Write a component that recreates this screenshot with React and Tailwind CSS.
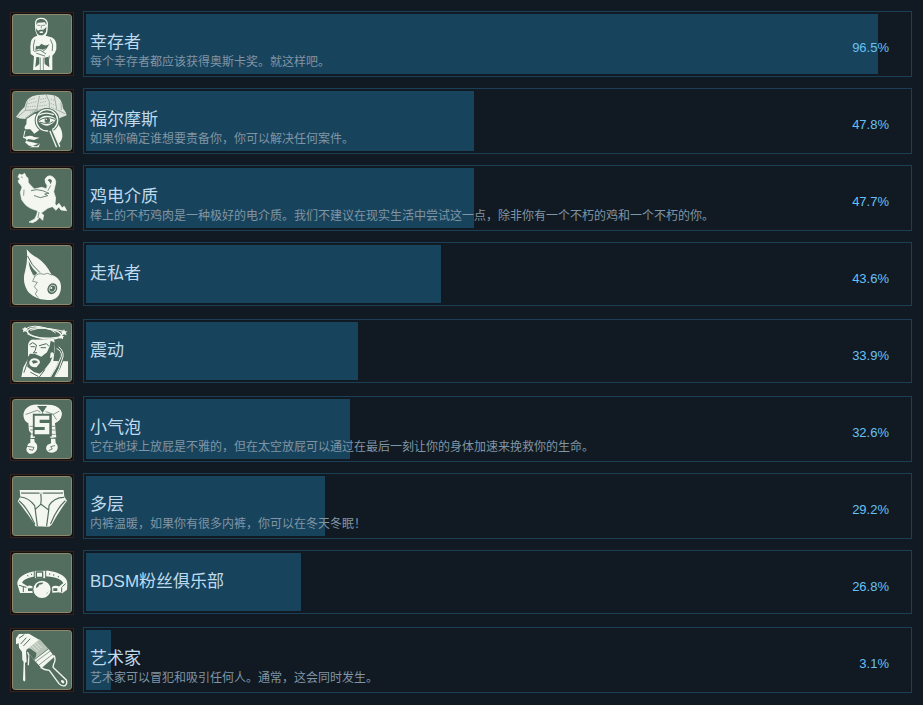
const INK = "#f3f7ef";
const FELT = "#536e5e";

function SurvivorIcon() {
  return (
    <g strokeLinecap="round" strokeLinejoin="round">
      <path d="M105 58 Q104 43 121 41 Q142 40 144 58 L143 78 Q142 90 137 95 L148 98 Q166 100 169 120 L169 136 Q166 148 157 155 L157 198 L99 198 L102 157 L92 150 Q89 130 93 112 Q97 98 112 95 Q104 84 105 58Z" fill={INK} />
      <path d="M109 58 Q108 46 121 45 Q137 44 140 58 L138 64 L135 55 L113 56 L110 63Z" fill={FELT} />
      <path d="M108 73 L114 80 L120 77 L130 77 L139 69 L138 83 Q132 94 124 94 Q112 94 109 83Z" fill={FELT} />
      <path d="M113 64h7 M127 64h7 M124 65v7" stroke={FELT} strokeWidth="2" fill="none" />
      <path d="M118 83 Q124 80 130 83 L128 87 L120 87Z" fill={INK} />
      <path d="M104 108 Q98 123 101 140 M152 107 Q162 122 157 140 M104 142 L120 138 L137 149 M110 148 L134 156 M139 134 L128 142 M148 156 L145 172" fill="none" stroke={FELT} strokeWidth="2.5" />
      <path d="M108 125 Q117 130 124 119 Q137 129 148 120 L141 132 L128 137 L117 134 L106 138Z M109 159 L118 160 L118 180 L106 190Z M133 161 L146 158 L148 190 L134 180Z" fill={FELT} />
      <path d="M121 162v35 M130 162v35" stroke={FELT} strokeWidth="2" />
    </g>
  );
}

function DetectiveIcon() {
  return (
    <g strokeLinecap="round" strokeLinejoin="round">
      <path d="M48 108 Q61 88 74 77 Q78 47 112 42 Q144 38 166 44 Q187 52 189 82 Q198 93 200 103 L178 112 L174 100 Q140 80 104 93 L76 114 Q58 114 48 108Z" fill="#dfe5dc" />
      <path d="M80 114 L104 98 L174 102 L178 112 L176 132 Q188 148 187 168 Q184 185 167 196 L146 152 L118 147 L103 158 L91 145 L76 145 Q70 140 79 130Z" fill={INK} />
      <path d="M54 107 L76 88 L112 86 M76 87 L82 62 M76 112 L105 90 L138 82 M139 43 L148 62 L148 82 M118 46 L111 84 M163 46 L171 88 M175 88 L194 98 M183 66 L184 86" fill="none" stroke="#7f9286" strokeWidth="2" />
      <path d="M88 57L104 52 M86 68L108 62 M83 78L106 75 M122 55L137 52 M121 65L139 61 M119 75L140 72 M153 55L164 59 M153 68L168 74 M154 79L170 86 M91 94L106 85" stroke="#aab8ad" strokeWidth="3" strokeDasharray="2 5" />
      <circle cx="141" cy="118" r="37" fill={FELT} />
      <circle cx="141" cy="118" r="32" fill={FELT} stroke={INK} strokeWidth="4" />
      <path d="M114 119 Q124 103 142 104 Q160 104 168 115 Q159 131 143 134 Q127 134 114 119Z" fill={INK} />
      <path d="M116 119 Q138 103 165 115 M121 124 Q145 132 159 122" fill="none" stroke={FELT} strokeWidth="3" />
      <path d="M117 102 Q138 91 160 101" fill="none" stroke={INK} strokeWidth="4" />
      <circle cx="142" cy="118" r="8" fill={FELT} />
      <circle cx="139" cy="115" r="2" fill={INK} />
      <path d="M151 149 L174 199" stroke={FELT} strokeWidth="14" />
      <path d="M150 151 L169 197 M158 148 L179 196" stroke={INK} strokeWidth="4" />
      <path d="M77 147 L72 168 L85 165 Q95 163 102 168 L119 170 L102 177 L85 174 L75 184 L87 194 L110 196 L119 190 L104 185 L82 181 L77 173 L69 170 L73 150Z M111 190 L120 188 L116 199 L88 199Z" fill={INK} />
    </g>
  );
}

function ChickenIcon() {
  return (
    <g strokeLinecap="round" strokeLinejoin="round">
      <path d="M54 57 L58 48 L66 51 L74 46 L78 55 L84 61 L85 74 L94 84 L103 93 L125 88 L139 92 Q145 84 137 75 Q131 63 141 56 Q154 49 164 62 Q170 70 165 84 L161 101 L167 120 L165 137 Q157 148 143 151 L131 160 L123 165 L131 171 L128 187 L119 178 L110 188 L98 194 L87 192 L104 183 L110 171 L113 158 Q87 152 75 139 L65 125 L61 103 L66 88 L62 80 L57 76 L54 68 L60 63Z" fill={INK} stroke={INK} strokeWidth="2" />
      <path d="M158 127 L169 143 L177 136 L186 149 L193 145 L200 158 L183 156 L176 147 L168 157 L152 141Z" fill={INK} stroke={INK} strokeWidth="2" />
      <path d="M94 98 L110 95 L128 98 L147 106 L134 108 L143 113 L121 119 L103 113" fill="none" stroke={FELT} strokeWidth="2.5" />
      <path d="M152 83 L144 97 M72 96 L71 112 M64 57l3 1" fill="none" stroke={FELT} strokeWidth="2" />
      <path d="M143 67 Q150 58 156 68 L152 79 Q148 68 143 67Z" fill={FELT} />
      <path d="M117 163 L114 179" stroke={FELT} strokeWidth="2" />
    </g>
  );
}

function EyeballIcon() {
  return (
    <g strokeLinecap="round" strokeLinejoin="round">
      <path d="M80 43 Q91 58 113 69 Q138 86 155 119 Q177 126 182 146 Q186 169 173 185 Q158 199 136 194 Q122 194 110 188 Q85 179 77 157 Q67 135 76 105 Q84 76 80 43Z" fill={INK} />
      <path d="M86 78 Q87 104 103 122 L112 114 Q95 100 86 78Z" fill={FELT} />
      <path d="M83 64 Q93 90 119 112" fill="none" stroke={FELT} strokeWidth="3" />
      <path d="M104 125 Q113 112 131 118 L143 115 L155 120 M104 125 L98 139 L112 142 L103 155 L112 166 L106 177 L114 187 M94 104 L100 120" fill="none" stroke={FELT} strokeWidth="2" />
      <ellipse cx="157" cy="161" rx="14" ry="17" fill={FELT} transform="rotate(28 157 161)" />
      <ellipse cx="157" cy="161" rx="9" ry="11" fill="none" stroke={INK} strokeWidth="2" transform="rotate(28 157 161)" />
      <circle cx="154" cy="159" r="3" fill={INK} />
    </g>
  );
}

function DizzyIcon() {
  return (
    <g strokeLinecap="round" strokeLinejoin="round">
      <path d="M84 98 Q88 80 105 83 L161 81 Q167 94 164 113 L160 147 L204 148 L204 195 L64 195 L70 166 L84 141Z" fill={INK} />
      <ellipse cx="133" cy="64" rx="51" ry="16" fill={FELT} stroke={INK} strokeWidth="4" transform="rotate(7 133 64)" />
      <path d="M76 51 Q99 35 139 49 Q165 52 188 57 M83 66 Q116 85 180 75 M92 55 Q140 38 166 62" fill="none" stroke={INK} strokeWidth="3" />
      <path d="M75 44l3 5 6 1-4 5 1 6-6-3-6 3 1-7-4-4 6-1z M192 52l3 6 7 0-5 5 3 7-8-3-7 5 1-9-5-4 7-1z M185 67l2 5 6 1-4 3 0 6-6-3-5 2 2-6-4-3 6-1z" fill={INK} />
      <path d="M89 98 L98 92 L108 98 M118 101 L139 95 L146 102 M93 104h10 M123 107h14 M109 100 L106 115 L100 123 L110 122" fill="none" stroke={FELT} strokeWidth="3" />
      <path d="M82 138 L90 125 L105 126 L124 134 L141 121 L149 103 L152 86 L165 92 L162 123 L151 150 L132 175 L119 185 L102 180 L82 164Z" fill={FELT} />
      <path d="M88 149 Q93 138 105 139 Q120 141 120 152 L110 165 Q95 168 88 156Z" fill={INK} />
      <path d="M95 147 Q108 141 114 151 L100 155Z" fill={FELT} />
      <path d="M152 122 Q162 118 161 130 Q158 140 150 138Z" fill={INK} />
      <path d="M84 147 L72 181" fill="none" stroke={FELT} strokeWidth="3" />
      <path d="M173 109 Q187 115 189 131 L175 166 L157 196" fill="none" stroke={FELT} strokeWidth="13" />
      <path d="M171 110 Q186 117 184 133 L171 162 L152 194 M177 105 Q192 117 189 135 L177 170 L165 194 M151 155 L161 151 L171 157" fill="none" stroke={INK} strokeWidth="3" />
      <path d="M92 181 L114 193 M134 174 L118 195" fill="none" stroke={FELT} strokeWidth="3" />
    </g>
  );
}

function BubbleIcon() {
  return (
    <g strokeLinecap="round" strokeLinejoin="round">
      <path d="M74 93 Q65 74 77 60 Q91 45 117 47 L142 47 Q171 47 182 63 Q191 78 178 94 Q168 104 151 106 L104 106 Q82 106 74 93Z" fill={INK} />
      <path d="M111 51 L141 51 L128 71Z" fill={FELT} />
      <path d="M78 76 L112 64 L120 69 M138 68 L160 76 L177 67 M159 76 L169 91 M128 71v10" fill="none" stroke={FELT} strokeWidth="2" />
      <path d="M85 103 L104 99 L105 146 L91 148 L93 132 L87 125Z M149 100 L165 102 L167 128 L169 145 L151 147Z" fill={INK} />
      <path d="M90 112h11 M92 123h10 M92 135h11 M154 112h10 M154 123h11 M155 136h11" stroke={FELT} strokeWidth="2" />
      <path d="M91 150 L103 150 L104 160 Q114 165 111 181 Q104 197 88 194 Q75 187 81 174 Q82 163 91 161Z M153 149 L166 149 L167 162 Q178 172 170 185 Q158 195 145 189 Q133 180 142 168 L153 163Z" fill={INK} />
      <path d="M82 172 L102 175 L98 184 L88 181 M164 170 L152 173 L157 180 L147 184" fill="none" stroke={FELT} strokeWidth="2.5" />
      <path d="M103 79 H151 V95 H122 V101 H151 V138 H103 V122 H134 V116 H103Z" fill={FELT} stroke={FELT} strokeWidth="9" strokeLinejoin="miter" />
      <path d="M104 80 H148 V92 H119 V102 H148 V136 H104 V123 H134 V114 H104Z" fill={INK} />
    </g>
  );
}

function BriefsIcon() {
  return (
    <g strokeLinecap="round" strokeLinejoin="round">
      <path d="M59 72 L191 72 L193 92 L201 104 Q180 132 155 176 L147 182 L106 181 L103 174 Q84 144 53 106 L61 92Z" fill={INK} />
      <path d="M62 93 Q85 94 104 119 L106 133 L112 179 M191 94 Q163 94 147 119 L146 134 L140 179 M122 82 Q125 100 122 115 L106 130 M123 115 L145 131 M58 105 Q84 127 104 174 M195 105 Q170 128 152 173" fill="none" stroke={FELT} strokeWidth="3.5" />
      <path d="M65 81 H187" stroke={FELT} strokeWidth="4" />
      <path d="M68 80 H183" stroke="#c3cbc1" strokeWidth="3" strokeDasharray="2 4" />
      <path d="M120 81h7" stroke={INK} strokeWidth="5" />
    </g>
  );
}

function CollarIcon() {
  return (
    <g strokeLinecap="round" strokeLinejoin="round">
      <path d="M52 124 Q50 98 96 86 Q128 79 164 87 Q203 98 202 124 L201 140 L187 151 L176 147 L178 130 L190 120 Q180 103 150 101 Q122 97 96 102 Q72 107 66 119 L85 131 L85 150 L60 150Z" fill={INK} />
      <path d="M58 127 L78 133 M70 133v13 M188 130l8-7 M185 134v13" stroke={FELT} strokeWidth="3" fill="none" />
      <path d="M82 129 Q94 124 104 135 Q108 140 101 150 L84 150Z M156 132 Q165 124 181 132 L180 148 L157 149Z" fill={INK} />
      <path d="M84 136h13v8H84z M160 136h12v8h-12z" fill={FELT} />
      <path d="M104 82 H137 V107 H104Z" fill={INK} stroke={FELT} strokeWidth="3" />
      <path d="M109 87 H128 V103 H109Z" fill="none" stroke={FELT} strokeWidth="4" />
      <circle cx="126" cy="139" r="28" fill={INK} stroke={FELT} strokeWidth="4" />
      <path d="M108 134 Q108 121 120 119 Q130 117 130 121 L122 125 Q119 121 116 130 L111 134Z M137 156 Q144 151 146 144" fill={FELT} />
      <path d="M94 93l1 2 M83 97l1 2 M149 92v2 M161 95v2 M175 100v2" stroke={FELT} strokeWidth="3" />
    </g>
  );
}

function BrushIcon() {
  return (
    <g strokeLinecap="round" strokeLinejoin="round">
      <path d="M48 55 L57 42 L87 41 L120 61 L78 92 L80 125 L75 129 L76 181 Q73 188 69 180 L71 126 L67 120 L66 96 L57 83 L56 70 L48 73Z" fill={INK} />
      <path d="M79 89 L119 58 L145 86 L102 121Z" fill="#b9c4b9" />
      <path d="M90 82 L107 101 M96 78 L113 94 M103 72 L118 88 M109 68 L124 83" stroke={INK} strokeWidth="2" />
      <path d="M79 90 Q88 82 96 89 L109 99 Q111 109 102 119Z" fill={FELT} />
      <path d="M58 54 L72 44 M63 71 L78 54 M71 77 L90 57" stroke={FELT} strokeWidth="3" />
      <path d="M102 120 L146 86 L163 108 L123 143Z" fill={INK} stroke={FELT} strokeWidth="2" />
      <path d="M109 124 L151 93 M118 134 L159 102" stroke={FELT} strokeWidth="2" />
      <path d="M123 143 L163 108 Q168 121 161 132 L159 142 L199 180 Q203 191 195 197 Q185 200 177 191 L148 151 Q133 150 123 143Z" fill={FELT} stroke={INK} strokeWidth="4" />
      <path d="M83 98 Q89 106 86 116 L85 134" fill="none" stroke={INK} strokeWidth="4" />
      <ellipse cx="188" cy="185" rx="4" ry="6" fill={INK} transform="rotate(-45 188 185)" />
    </g>
  );
}

const achievements = [
  { title: "幸存者", description: "每个幸存者都应该获得奥斯卡奖。就这样吧。", percent: 96.5, Icon: SurvivorIcon },
  { title: "福尔摩斯", description: "如果你确定谁想要责备你，你可以解决任何案件。", percent: 47.8, Icon: DetectiveIcon },
  { title: "鸡电介质", description: "棒上的不朽鸡肉是一种极好的电介质。我们不建议在现实生活中尝试这一点，除非你有一个不朽的鸡和一个不朽的你。", percent: 47.7, Icon: ChickenIcon },
  { title: "走私者", description: "", percent: 43.6, Icon: EyeballIcon },
  { title: "震动", description: "", percent: 33.9, Icon: DizzyIcon },
  { title: "小气泡", description: "它在地球上放屁是不雅的，但在太空放屁可以通过在最后一刻让你的身体加速来挽救你的生命。", percent: 32.6, Icon: BubbleIcon },
  { title: "多层", description: "内裤温暖，如果你有很多内裤，你可以在冬天冬眠！", percent: 29.2, Icon: BriefsIcon },
  { title: "BDSM粉丝俱乐部", description: "", percent: 26.8, Icon: CollarIcon },
  { title: "艺术家", description: "艺术家可以冒犯和吸引任何人。通常，这会同时发生。", percent: 3.1, Icon: BrushIcon },
];

function AchievementRow({ title, description, percent, Icon }) {
  return (
    <li className="flex h-[66px] items-start gap-[9px]">
      <svg viewBox="30 24 192 192" className="mt-px size-16 shrink-0" aria-hidden="true">
        <rect x="31.5" y="25.5" width="189" height="189" fill="#12110f" stroke="#35221e" strokeWidth="3" />
        <rect x="37.5" y="31.5" width="177" height="177" rx="8" fill={FELT} stroke="#8e8a70" strokeWidth="3" />
        <Icon />
      </svg>

      <div
        className={`relative min-w-0 flex-1 border border-[#1b3f54] py-0.5 pl-0.5 ${
          description ? "h-[66px]" : "h-16"
        }`}
      >
        {/* whole percents only, the fill never shows the decimal */}
        <div className="h-full bg-[#18435c]" style={{ width: `${Math.floor(percent)}%` }} />
        <div className="absolute inset-0 flex items-start justify-between pr-[22px] pl-1.5">
          <div className="min-w-0 pt-5">
            <h3 className="text-[17px] leading-[22px] text-[#bfdaec]">{title}</h3>
            {description ? (
              <p className="text-xs leading-4 text-[#8095a4]">{description}</p>
            ) : null}
          </div>
          <span className="pt-7 text-[13px] leading-4 text-[#67c1f5]">{percent}%</span>
        </div>
      </div>
    </li>
  );
}

export default function App() {
  return (
    <main className="min-h-screen bg-[#111a23] py-[11px] pr-[11px] pl-2.5 font-['Liberation_Sans','Noto_Sans_CJK_SC',sans-serif]">
      <ul className="flex flex-col gap-[11px]">
        {achievements.map((item) => (
          <AchievementRow key={item.title} {...item} />
        ))}
      </ul>
    </main>
  );
}
